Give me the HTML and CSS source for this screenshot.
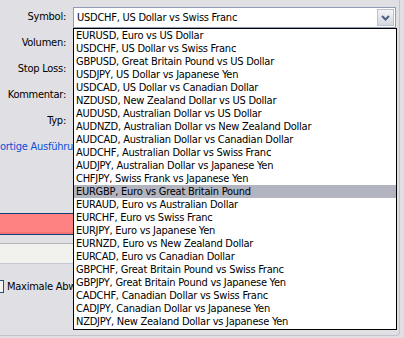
FILE: index.html
```html
<!DOCTYPE html>
<html lang="de">
<head>
  <meta charset="UTF-8">
  <title>Order</title>
  <link rel="stylesheet" href="styles.css">
</head>
<body>

<div class="panel">
  <div class="form">
    <label>Symbol:</label>
    <div class="select">
      <span>USDCHF, US Dollar vs Swiss Franc</span>
      <span class="drop-btn">
        <svg width="9" height="6" viewBox="0 0 9 6"><path d="M1 1 L4.5 4.5 L8 1" fill="none" stroke="#4d6185" stroke-width="2"/></svg>
      </span>
    </div>
    <label>Volumen:</label><div></div>
    <label>Stop Loss:</label><div></div>
    <label>Kommentar:</label><div></div>
    <label>Typ:</label><div></div>
    <div class="link">ortige Ausführung</div>
  </div>

  <div class="pink-box"></div>
  <div class="light-box"></div>

  <div class="check-row">
    <span class="checkbox"></span>
    <span class="check-label">Maximale Abweichung</span>
  </div>
</div>

<ul class="dropdown">
  <li>EURUSD, Euro vs US Dollar</li>
  <li>USDCHF, US Dollar vs Swiss Franc</li>
  <li>GBPUSD, Great Britain Pound vs US Dollar</li>
  <li>USDJPY, US Dollar vs Japanese Yen</li>
  <li>USDCAD, US Dollar vs Canadian Dollar</li>
  <li>NZDUSD, New Zealand Dollar vs US Dollar</li>
  <li>AUDUSD, Australian Dollar vs US Dollar</li>
  <li>AUDNZD, Australian Dollar vs New Zealand Dollar</li>
  <li>AUDCAD, Australian Dollar vs Canadian Dollar</li>
  <li>AUDCHF, Australian Dollar vs Swiss Franc</li>
  <li>AUDJPY, Australian Dollar vs Japanese Yen</li>
  <li>CHFJPY, Swiss Frank vs Japanese Yen</li>
  <li class="selected">EURGBP, Euro vs Great Britain Pound</li>
  <li>EURAUD, Euro vs Australian Dollar</li>
  <li>EURCHF, Euro vs Swiss Franc</li>
  <li>EURJPY, Euro vs Japanese Yen</li>
  <li>EURNZD, Euro vs New Zealand Dollar</li>
  <li>EURCAD, Euro vs Canadian Dollar</li>
  <li>GBPCHF, Great Britain Pound vs Swiss Franc</li>
  <li>GBPJPY, Great Britain Pound vs Japanese Yen</li>
  <li>CADCHF, Canadian Dollar vs Swiss Franc</li>
  <li>CADJPY, Canadian Dollar vs Japanese Yen</li>
  <li>NZDJPY, New Zealand Dollar vs Japanese Yen</li>
</ul>

</body>
</html>
```

FILE: styles.css
```css
body {
  margin: 0;
  background-color: #e0dfe3;
  font-family: "DejaVu Sans Condensed", "DejaVu Sans", sans-serif;
  font-size: 11px;
  letter-spacing: -0.25px;
  color: #000;
  overflow: hidden;
}
.panel {
  width: 400px;
  height: 336px;
  box-sizing: border-box;
  border-right: 1px solid #c4c3ca;
  border-bottom: 1px solid #c4c3ca;
  border-bottom-right-radius: 4px;
  overflow: hidden;
}
.form {
  display: grid;
  grid-template-columns: 66px 323px;
  grid-auto-rows: 26px;
  column-gap: 7px;
  padding-top: 4px;
}
.form label {
  text-align: right;
  line-height: 26px;
}
.select {
  margin-top: 3px;
  height: 21px;
  box-sizing: border-box;
  border: 1px solid #8e9db5;
  background: #fff;
  display: flex;
  align-items: center;
  justify-content: space-between;
  padding-left: 3px;
}
.drop-btn {
  width: 17px;
  height: 17px;
  margin-right: 1px;
  box-sizing: border-box;
  border: 1px solid #b9c1cf;
  background: linear-gradient(#f4f4f7, #d6d8e1);
  display: flex;
  align-items: center;
  justify-content: center;
}
.link {
  grid-column: 1 / 3;
  width: 73px;
  overflow: hidden;
  white-space: nowrap;
  line-height: 26px;
  color: #0b4fd4;
}
.pink-box {
  margin-top: 53px;
  width: 380px;
  height: 22px;
  box-sizing: border-box;
  border-top: 1px solid #123f72;
  border-bottom: 1px solid #123f72;
  background: #ff8282;
  box-shadow: inset 0 -2px 0 #f07474;
}
.light-box {
  margin-top: 8px;
  width: 380px;
  height: 21px;
  box-sizing: border-box;
  border-top: 1px solid #b8b7be;
  border-bottom: 1px solid #c8c7cd;
  background: #f1f1ed;
}
.check-row {
  margin-top: 16px;
  margin-left: -9px;
  display: flex;
  align-items: center;
  gap: 3px;
}
.checkbox {
  flex: none;
  width: 13px;
  height: 13px;
  box-sizing: border-box;
  border: 1px solid #1c5180;
  background: #f4f4f0;
}
.check-label {
  width: 66px;
  overflow: hidden;
  white-space: nowrap;
}
.dropdown {
  position: absolute;
  left: 73px;
  top: 28px;
  width: 324px;
  margin: 0;
  padding: 0 0 1px 0;
  list-style: none;
  box-sizing: border-box;
  border: 1px solid #000;
  background: #fff;
}
.dropdown li {
  height: 13px;
  line-height: 13px;
  padding-left: 2px;
  white-space: nowrap;
}
.dropdown li.selected {
  background: #b2b4bf;
}
```
